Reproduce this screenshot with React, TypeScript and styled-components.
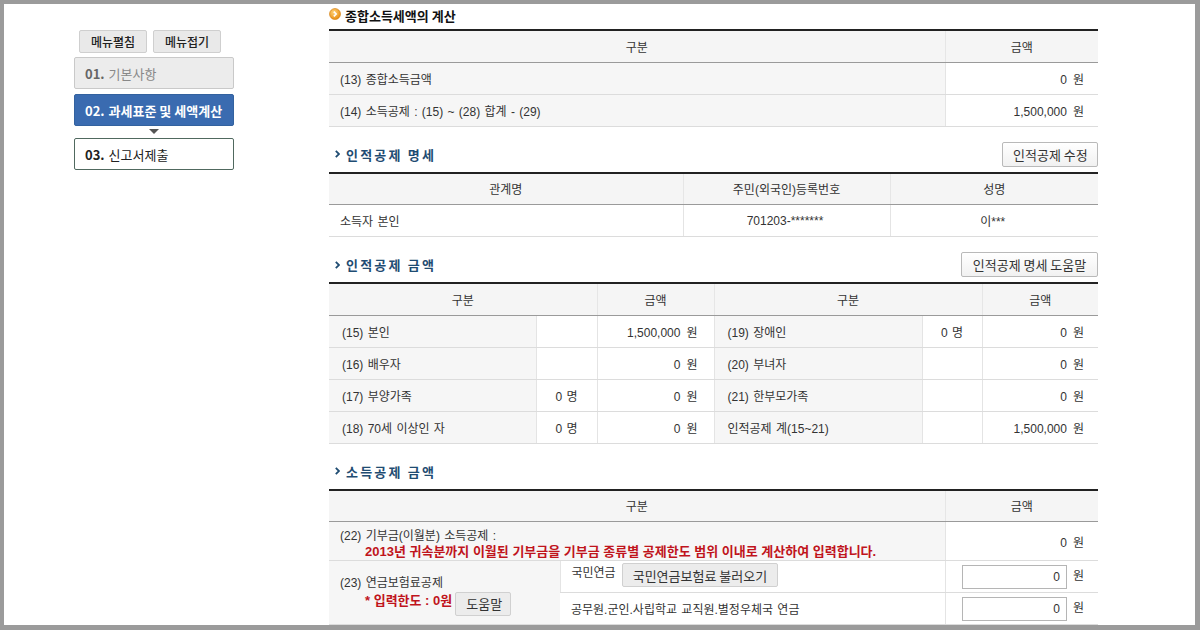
import React from "react";
import styled, { createGlobalStyle } from "styled-components";

const GlobalStyle = createGlobalStyle`
  html, body { margin: 0; padding: 0; background: #fff; }
  body {
    font-family: "Liberation Sans", "Noto Sans CJK KR", sans-serif;
    font-size: 12px;
    word-spacing: 1px;
    color: #333;
  }
  * { box-sizing: border-box; }
`;

const Frame = styled.div`
  width: 1200px;
  height: 630px;
  border-style: solid;
  border-color: #9b9b9b;
  border-width: 4px 5px 5px 4px;
  overflow: hidden;
  display: flex;
  background: #fff;
`;

const Sidebar = styled.aside`
  width: 325px;
  flex: none;
  padding: 26px 0 0 70px;
  display: flex;
  flex-direction: column;
  word-spacing: 0;
`;

const ToggleRow = styled.div`
  display: flex;
  gap: 6px;
  padding-left: 5px;
`;

const ToggleButton = styled.button`
  width: 68px;
  height: 23px;
  padding: 0;
  border: 1px solid #cfcfcf;
  border-radius: 2px;
  background: #e9e9e9;
  color: #222;
  font-family: "Noto Sans CJK KR", sans-serif;
  font-size: 12px;
  font-weight: 500;
  line-height: 21px;
`;

const StepList = styled.div`
  margin-top: 4px;
  width: 160px;
  display: flex;
  flex-direction: column;
`;

type Variant = "done" | "active" | "next";

const Step = styled.div<{ $variant: Variant }>`
  height: 32px;
  display: flex;
  align-items: center;
  padding-left: 10px;
  font-family: "Noto Sans CJK KR", sans-serif;
  font-size: 13px;
  border-radius: 2px;
  border: 1px solid
    ${(p) => (p.$variant === "done" ? "#c9c9c9" : p.$variant === "active" ? "#33629f" : "#50695f")};
  background: ${(p) => (p.$variant === "done" ? "#ececec" : p.$variant === "active" ? "#3a6bb0" : "#fff")};
  color: ${(p) => (p.$variant === "done" ? "#888" : p.$variant === "active" ? "#fff" : "#222")};
  font-weight: ${(p) => (p.$variant === "active" ? 700 : 400)};
  margin-top: ${(p) => (p.$variant === "active" ? 5 : 0)}px;
`;

const StepNum = styled.b<{ $variant: Variant }>`
  font-weight: 700;
  margin-right: 4px;
  color: ${(p) => (p.$variant === "done" ? "#666" : "inherit")};
`;

const StepArrow = styled.div`
  height: 12px;
  display: flex;
  justify-content: center;
  padding-top: 3px;
  &::after {
    content: "";
    border-left: 5px solid transparent;
    border-right: 5px solid transparent;
    border-top: 5px solid #555;
    height: 0;
    width: 0;
  }
`;

const Main = styled.main`
  width: 769px;
  flex: none;
  display: flex;
  flex-direction: column;
`;

const PageTitle = styled.h2`
  margin: 0;
  height: 25px;
  display: flex;
  align-items: center;
  gap: 4px;
  font-family: "Noto Sans CJK KR", sans-serif;
  font-size: 13px;
  font-weight: 700;
  word-spacing: 0;
  color: #111;
  padding-bottom: 2px;
`;

const SectionBar = styled.div`
  padding-top: 15px;
  margin-bottom: 5px;
  height: 25px;
  box-sizing: content-box;
  display: flex;
  align-items: center;
  justify-content: space-between;
`;

const SectionTitle = styled.h3`
  margin: 0;
  padding-left: 6px;
  display: flex;
  align-items: center;
  gap: 6px;
  font-family: "Noto Sans CJK KR", sans-serif;
  font-size: 13px;
  letter-spacing: 2.2px;
  word-spacing: 0;
  font-weight: 700;
  color: #1f4c72;
`;

const PlainButton = styled.button<{ $w?: number; $h?: number }>`
  height: ${(p) => p.$h ?? 25}px;
  ${(p) => (p.$w ? `width: ${p.$w}px;` : "")}
  padding: 0 10px;
  border: 1px solid #b9b9b9;
  border-radius: 2px;
  background: linear-gradient(#ffffff, #f1f1f1);
  color: #333;
  font-family: "Noto Sans CJK KR", sans-serif;
  font-size: 13px;
  word-spacing: 0;
  white-space: nowrap;
`;

const GrayButton = styled(PlainButton)`
  background: #ececec;
  border-color: #d0d0d0;
  padding: 0 10px;
`;

const Table = styled.table`
  width: 769px;
  table-layout: fixed;
  border-collapse: collapse;
  border-top: 2px solid #222;
`;

const Head = styled.th`
  height: 32px;
  padding: 0;
  background: #f5f5f5;
  border-bottom: 1px solid #9a9a9a;
  border-left: 1px solid #e6e6e6;
  font-weight: 400;
  color: #333;
  text-align: center;
  &:first-child { border-left: none; }
`;

const Cell = styled.td<{
  $align?: "left" | "center" | "right";
  $gray?: boolean;
  $h?: number;
  $pl?: number;
  $pr?: number;
}>`
  height: ${(p) => p.$h ?? 32}px;
  padding: 0 ${(p) => p.$pr ?? 14}px 0 ${(p) => p.$pl ?? 11}px;
  border-bottom: 1px solid #dcdcdc;
  border-left: 1px solid #e4e4e4;
  background: ${(p) => (p.$gray ? "#f6f6f6" : "#fff")};
  text-align: ${(p) => p.$align ?? "left"};
  color: #333;
  vertical-align: middle;
  white-space: nowrap;
  &:first-child { border-left: none; }
`;

const TopCell = styled(Cell)`
  vertical-align: top;
`;

const Unit = styled.span`
  margin-left: 6px;
`;

const RedNote = styled.div`
  color: #c0141c;
  font-weight: 700;
  font-size: 13px;
  word-spacing: 0;
  padding-left: 25px;
`;

const StackedLabel = styled.div`
  display: flex;
  flex-direction: column;
  line-height: 16px;
  padding-top: 5px;
`;

const PensionLabel = styled.div`
  display: flex;
  flex-direction: column;
  line-height: 18px;
  padding-top: 4px;
`;

const LimitLine = styled.div`
  display: flex;
  align-items: flex-start;
  gap: 3px;
`;

const SubRow = styled.div`
  display: flex;
  align-items: flex-start;
  gap: 6px;
  padding-top: 2px;
`;

const AmountInput = styled.input`
  width: 105px;
  height: 24px;
  border: 1px solid #b5b5b5;
  padding: 0 6px;
  text-align: right;
  font-family: inherit;
  font-size: 12px;
  color: #333;
  vertical-align: middle;
`;

const TitleIcon = () => (
  <svg width="12" height="12" viewBox="0 0 12 12" style={{ marginTop: -4 }}>
    <defs>
      <radialGradient id="og" cx="40%" cy="35%" r="70%">
        <stop offset="0" stopColor="#ffd37a" />
        <stop offset="1" stopColor="#e88a0c" />
      </radialGradient>
    </defs>
    <circle cx="6" cy="6" r="5.5" fill="url(#og)" stroke="#d27a0a" strokeWidth="0.6" />
    <path d="M4.8 3.6 L7.2 6 L4.8 8.4" fill="none" stroke="#fff" strokeWidth="1.6" />
  </svg>
);

const Chevron = () => (
  <svg width="5" height="8" viewBox="0 0 5 8">
    <path d="M0.8 0.8 L4 4 L0.8 7.2" fill="none" stroke="#1f4c72" strokeWidth="1.8" />
  </svg>
);

const Won = ({ v }: { v: string }) => (
  <>
    {v}
    <Unit>원</Unit>
  </>
);

const personRows: [string, string, string, string, string, string][] = [
  ["(15) 본인", "", "1,500,000", "(19) 장애인", "0 명", "0"],
  ["(16) 배우자", "", "0", "(20) 부녀자", "", "0"],
  ["(17) 부양가족", "0 명", "0", "(21) 한부모가족", "", "0"],
  ["(18) 70세 이상인 자", "0 명", "0", "인적공제 계(15~21)", "", "1,500,000"],
];

export default function App() {
  return (
    <>
      <GlobalStyle />
      <Frame>
        <Sidebar>
          <ToggleRow>
            <ToggleButton>메뉴펼침</ToggleButton>
            <ToggleButton>메뉴접기</ToggleButton>
          </ToggleRow>
          <StepList>
            <Step $variant="done">
              <StepNum $variant="done">01.</StepNum>기본사항
            </Step>
            <Step $variant="active">
              <StepNum $variant="active">02.</StepNum>과세표준 및 세액계산
            </Step>
            <StepArrow />
            <Step $variant="next">
              <StepNum $variant="next">03.</StepNum>신고서제출
            </Step>
          </StepList>
        </Sidebar>

        <Main>
          <PageTitle>
            <TitleIcon />
            종합소득세액의 계산
          </PageTitle>
          <Table>
            <colgroup>
              <col style={{ width: 616 }} />
              <col style={{ width: 153 }} />
            </colgroup>
            <thead>
              <tr>
                <Head>구분</Head>
                <Head>금액</Head>
              </tr>
            </thead>
            <tbody>
              <tr>
                <Cell $gray>(13) 종합소득금액</Cell>
                <Cell $align="right">
                  <Won v="0" />
                </Cell>
              </tr>
              <tr>
                <Cell $gray>(14) 소득공제 : (15) ~ (28) 합계 - (29)</Cell>
                <Cell $align="right">
                  <Won v="1,500,000" />
                </Cell>
              </tr>
            </tbody>
          </Table>

          <SectionBar>
            <SectionTitle>
              <Chevron />
              인적공제 명세
            </SectionTitle>
            <PlainButton $w={96}>인적공제 수정</PlainButton>
          </SectionBar>
          <Table>
            <colgroup>
              <col style={{ width: 354 }} />
              <col style={{ width: 207 }} />
              <col style={{ width: 208 }} />
            </colgroup>
            <thead>
              <tr>
                <Head>관계명</Head>
                <Head>주민(외국인)등록번호</Head>
                <Head>성명</Head>
              </tr>
            </thead>
            <tbody>
              <tr>
                <Cell>소득자 본인</Cell>
                <Cell $align="center">701203-*******</Cell>
                <Cell $align="center">이***</Cell>
              </tr>
            </tbody>
          </Table>

          <SectionBar>
            <SectionTitle>
              <Chevron />
              인적공제 금액
            </SectionTitle>
            <PlainButton $w={137}>인적공제 명세 도움말</PlainButton>
          </SectionBar>
          <Table>
            <colgroup>
              <col style={{ width: 207 }} />
              <col style={{ width: 61 }} />
              <col style={{ width: 117 }} />
              <col style={{ width: 208 }} />
              <col style={{ width: 60 }} />
              <col style={{ width: 116 }} />
            </colgroup>
            <thead>
              <tr>
                <Head colSpan={2}>구분</Head>
                <Head>금액</Head>
                <Head colSpan={2}>구분</Head>
                <Head>금액</Head>
              </tr>
            </thead>
            <tbody>
              {personRows.map((r) => (
                <tr key={r[0]}>
                  <Cell $gray $pl={13}>{r[0]}</Cell>
                  <Cell $align="center" $pl={0} $pr={0}>{r[1]}</Cell>
                  <Cell $align="right" $pr={16}>
                    <Won v={r[2]} />
                  </Cell>
                  <Cell $gray $pl={13}>{r[3]}</Cell>
                  <Cell $align="center" $pl={0} $pr={0}>{r[4]}</Cell>
                  <Cell $align="right">
                    <Won v={r[5]} />
                  </Cell>
                </tr>
              ))}
            </tbody>
          </Table>

          <SectionBar>
            <SectionTitle>
              <Chevron />
              소득공제 금액
            </SectionTitle>
          </SectionBar>
          <Table>
            <colgroup>
              <col style={{ width: 231 }} />
              <col style={{ width: 385 }} />
              <col style={{ width: 153 }} />
            </colgroup>
            <thead>
              <tr>
                <Head colSpan={2}>구분</Head>
                <Head>금액</Head>
              </tr>
            </thead>
            <tbody>
              <tr>
                <Cell $gray colSpan={2} $h={39}>
                  <StackedLabel>
                    <span>(22) 기부금(이월분) 소득공제 :</span>
                    <RedNote>
                      2013년 귀속분까지 이월된 기부금을 기부금 종류별 공제한도 범위 이내로 계산하여 입력합니다.
                    </RedNote>
                  </StackedLabel>
                </Cell>
                <Cell $align="right" $h={39}>
                  <Won v="0" />
                </Cell>
              </tr>
              <tr>
                <Cell $gray rowSpan={2}>
                  <PensionLabel>
                    <span>(23) 연금보험료공제</span>
                    <LimitLine>
                      <RedNote>* 입력한도 : 0원</RedNote>
                      <GrayButton $w={56} $h={24}>도움말</GrayButton>
                    </LimitLine>
                  </PensionLabel>
                </Cell>
                <TopCell>
                  <SubRow>
                    <span>국민연금</span>
                    <GrayButton $h={24}>국민연금보험료 불러오기</GrayButton>
                  </SubRow>
                </TopCell>
                <Cell $align="right">
                  <AmountInput defaultValue="0" readOnly />
                  <Unit>원</Unit>
                </Cell>
              </tr>
              <tr>
                <Cell>공무원.군인.사립학교 교직원.별정우체국 연금</Cell>
                <Cell $align="right">
                  <AmountInput defaultValue="0" readOnly />
                  <Unit>원</Unit>
                </Cell>
              </tr>
            </tbody>
          </Table>
        </Main>
      </Frame>
    </>
  );
}
